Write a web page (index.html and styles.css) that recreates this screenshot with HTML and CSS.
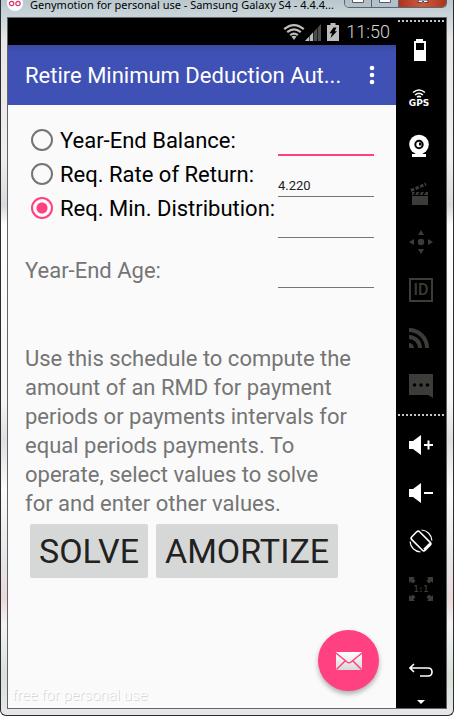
FILE: index.html
```
<!DOCTYPE html>
<html lang="en">
<head>
    <meta charset="UTF-8">
    <title>Genymotion for personal use</title>
    <link rel="stylesheet" href="styles.css">
</head>
<body>
    <div class="window">
        <div class="titlebar">
            <svg class="logo" width="16" height="16" viewBox="0 0 16 16">
                <circle cx="8" cy="8" r="8" fill="#fff"/>
                <g fill="none" stroke="#e0336a" stroke-width="1.2">
                    <circle cx="4.6" cy="8.5" r="2.2"/>
                    <circle cx="11" cy="8.5" r="2.2"/>
                </g>
            </svg>
            <span class="caption">Genymotion for personal use - Samsung Galaxy S4 - 4.4.4...</span>
            <div class="win-btns">
                <button class="win-btn" aria-label="Minimize"><svg width="12" height="4" viewBox="0 0 12 4"><path d="M.5 0v2.500h11V0" fill="#fff" stroke="#555b66"/></svg></button>
                <button class="win-btn" aria-label="Maximize"><svg width="12" height="4" viewBox="0 0 12 4"><path d="M.5 0v2.500h11V0" fill="#fff" stroke="#555b66"/></svg></button>
                <button class="win-btn close" aria-label="Close"><svg width="12" height="4" viewBox="0 0 12 4"><path d="M2 0L0.500 2.500h4L6 1l1.500 1.500h4L10 0z" fill="#fff" stroke="#4a4a58"/></svg></button>
            </div>
        </div>
        <div class="frame">
            <div class="screen">
                <div class="status">
                    <svg width="22" height="18" viewBox="0 0 22 18" fill="none" stroke="#bdbdbd" stroke-width="2.2">
                        <path d="M1.200 6.200Q11-2 20.800 6.200M4.200 9.200Q11 3.600 17.800 9.200M7.200 12.200Q11 9.200 14.800 12.200"/>
                        <path d="M8.500 13.600Q11 12 13.500 13.600L11 17z" fill="#bdbdbd" stroke="none"/>
                    </svg>
                    <svg width="16" height="18" viewBox="0 0 16 18">
                        <path d="M16 1v17H0z" fill="#4d4d4d"/>
                        <path d="M8 9.500V18H0z" fill="#bdbdbd"/>
                        <path d="M4.500 12v6M8.500 8v10M12.500 4v14" stroke="#000" stroke-width=".6"/>
                    </svg>
                    <svg class="charge" width="12" height="18" viewBox="0 0 12 18">
                        <path d="M3.500 0h5v2H12v16H0V2h3.500z" fill="#bdbdbd"/>
                        <path d="M6.500 4.500h3L7.800 8.300h2.200L3.500 15l1.500-4.800H2.500z" fill="#000"/>
                    </svg>
                    <span class="clock">11:50</span>
                </div>
                <div class="appbar">
                    <h1>Retire Minimum Deduction Aut...</h1>
                    <button class="more" aria-label="More options">
                        <svg width="6" height="20" viewBox="0 0 6 20" fill="#fff"><circle cx="3" cy="3" r="2.300"/><circle cx="3" cy="10" r="2.300"/><circle cx="3" cy="17" r="2.300"/></svg>
                    </button>
                </div>
                <div class="content">
                    <form class="form">
                        <div class="labels">
                            <label class="option"><input type="radio" name="solve">Year-End Balance:</label>
                            <label class="option"><input type="radio" name="solve">Req. Rate of Return:</label>
                            <label class="option"><input type="radio" name="solve" checked>Req. Min. Distribution:</label>
                            <label class="age" for="age">Year-End Age:</label>
                        </div>
                        <div class="fields">
                            <input type="text" class="field active" aria-label="Year-End Balance">
                            <input type="text" class="field" aria-label="Req. Rate of Return" value="4.220">
                            <input type="text" class="field" aria-label="Req. Min. Distribution">
                            <input type="text" class="field last" id="age">
                        </div>
                    </form>
                    <p class="help">Use this schedule to compute the amount of an RMD for payment periods or payments intervals for equal periods payments. To operate, select values to solve<br>for and enter other values.</p>
                    <div class="actions">
                        <button class="btn">SOLVE</button>
                        <button class="btn">AMORTIZE</button>
                    </div>
                </div>
                <button class="fab" aria-label="Mail">
                    <svg width="28" height="20" viewBox="0 0 28 20">
                        <defs><linearGradient id="g" x1="0" y1="0" x2="0" y2="1"><stop offset="0" stop-color="#fff"/><stop offset="1" stop-color="#d8d8d8"/></linearGradient></defs>
                        <rect x="1" y="1" width="26" height="18" rx="1" fill="url(#g)"/>
                        <path d="M1 2l11 9q2 1.500 4 0L27 2M1.500 18.500L10 10M26.500 18.500L18 10" fill="none" stroke="#ff4081" stroke-width="1.500"/>
                    </svg>
                </button>
                <span class="watermark">free for personal use</span>
            </div>
            <div class="toolbar">
                <div class="dots"></div>
                <button class="tool" aria-label="Battery">
                    <svg width="24" height="24" viewBox="0 0 24 24"><path d="M7 1h7v2h3v20H5V3h2z" fill="#fff"/><path d="M7 5h8v7H7z" fill="#000"/></svg>
                </button>
                <button class="tool gps">
                    <svg width="14" height="9" viewBox="0 0 14 9" fill="none" stroke="#fff" stroke-width="1.500"><path d="M1 3.500Q7-1.500 13 3.500M3 6Q7 2.500 11 6M5 8.300Q7 6.500 9 8.300"/></svg>
                    GPS
                </button>
                <button class="tool" aria-label="Camera">
                    <svg width="24" height="24" viewBox="0 0 24 24"><circle cx="10" cy="10.500" r="9.800" fill="#fff"/><path d="M7 18h6v2h4v3H3v-3h4z" fill="#fff"/><circle cx="10" cy="10.500" r="3.700" fill="#fff" stroke="#000" stroke-width="2"/><path d="M10 11.500V8.500h2.500v3z" fill="#000"/></svg>
                </button>
                <button class="tool off" aria-label="Screencast">
                    <svg width="24" height="24" viewBox="0 0 24 24"><path d="M3 10h16v13H3z" fill="#3c3c38"/><path d="M3 13.500h16" stroke="#000" stroke-width="1"/><path d="M5 13l2-3M9.500 13l2-3M14 13l2-3" stroke="#000" stroke-width="1.500"/><path d="M2 8.500L17 2" stroke="#3c3c38" stroke-width="3" stroke-dasharray="3.500 1.500"/></svg>
                </button>
                <button class="tool off" aria-label="Remote">
                    <svg width="24" height="24" viewBox="0 0 24 24" fill="#3c3c38"><circle cx="12" cy="12" r="3.200"/><path d="M12 0l3 5H9zM12 24l3-5H9zM0 12l5-3v6zM24 12l-5-3v6z"/></svg>
                </button>
                <button class="tool off ident"><span>ID</span></button>
                <button class="tool off" aria-label="Network">
                    <svg width="24" height="24" viewBox="0 0 24 24" fill="none" stroke="#3c3c38" stroke-width="4"><path d="M0 4a18 18 0 0 1 18 18M0 11a11 11 0 0 1 11 11"/><path d="M0 17a5 5 0 0 1 5 5H0z" fill="#3c3c38" stroke="none"/></svg>
                </button>
                <button class="tool off" aria-label="Messages">
                    <svg width="24" height="24" viewBox="0 0 24 24"><path d="M0 0h24v24l-5-3H0z" fill="#3c3c38"/><g fill="#000"><circle cx="5.500" cy="11" r="1.800"/><circle cx="12" cy="11" r="1.800"/><circle cx="18.500" cy="11" r="1.800"/></g></svg>
                </button>
                <div class="dots"></div>
                <button class="tool" aria-label="Volume up">
                    <svg width="24" height="24" viewBox="0 0 24 24"><path d="M0 8h4l8-6v20l-8-6H0z" fill="#fff"/><path d="M15 12h9M19.500 7.500v9" stroke="#fff" stroke-width="2"/></svg>
                </button>
                <button class="tool" aria-label="Volume down">
                    <svg width="24" height="24" viewBox="0 0 24 24"><path d="M0 8h4l8-6v20l-8-6H0z" fill="#fff"/><path d="M15 12h9" stroke="#fff" stroke-width="2"/></svg>
                </button>
                <button class="tool" aria-label="Rotate">
                    <svg width="24" height="24" viewBox="0 0 24 24" fill="none" stroke="#fff"><rect x="6.500" y="2.500" width="11" height="19" rx="2" stroke-width="1.600" transform="rotate(-45 12 12)"/><path d="M15 20.500l6-6" stroke-width="2"/><path d="M12.500 1a11 11 0 0 1 10.400 10.500M11.500 23A11 11 0 0 1 1.100 12.500" stroke-width="1.200"/></svg>
                </button>
                <button class="tool off scale">
                    <svg width="24" height="24" viewBox="0 0 24 24" fill="#3c3c38"><path d="M0 0h6L4.500 1.500 6.500 4 4 6.500 1.500 4.500 0 6zM24 0h-6l1.500 1.500L17.500 4 20 6.500l2.500-2L24 6zM0 24h6l-1.500-1.500 2-2.500L4 17.500l-2.500 2L0 18zM24 24h-6l1.500-1.500-2-2.500 2.500-2.500 2.500 2L24 18z"/></svg>
                    <span>1:1</span>
                </button>
                <button class="tool back" aria-label="Back">
                    <svg width="24" height="16" viewBox="0 0 24 16" fill="none" stroke="#fff" stroke-width="1.600"><path d="M5 2L1 6l4 4M1 6h18q4 0 4 4t-4 4h-8"/></svg>
                </button>
                <svg class="caret" width="8" height="4" viewBox="0 0 8 4"><path d="M0 0h8L4 4z" fill="#fff"/></svg>
            </div>
        </div>
    </div>
</body>
</html>
```
FILE: styles.css
```
* {
    box-sizing: border-box;
}
body {
    margin: 0;
    padding-right: 10px;
    background: #fff;
    font-family: Roboto, "Liberation Sans", sans-serif;
}
button {
    margin: 0;
    padding: 0;
    border: 0;
    background: none;
    font-family: inherit;
    cursor: pointer;
}
svg {
    display: block;
    flex: none;
}

/* glass window */
.window {
    display: flex;
    flex-direction: column;
    min-height: 100vh;
    padding: 0 6px 6px;
    border: 1px solid #2c2c30;
    border-top: 0;
    border-radius: 0 0 6px 6px;
    background: linear-gradient(#b9c8ce 0, #cbd6da 17px, #e9e6e7 40px, #f0eeee 160px, #d9d9dc 205px, #fdfdfd 225px, #f6f6f6 400px, #dfdfe2 440px, #fafafa 490px, #e6e6e8 560px, #ecd9da 598px, #f3f3f3 625px, #d8e2d9 675px, #e6e6e8 710px);
}
.titlebar {
    display: flex;
    align-items: flex-start;
    height: 17px;
}
.logo {
    margin-top: -5px;
}
.caption {
    flex: 1;
    min-width: 0;
    margin-left: 7px;
    font: 11px/9px "Noto Sans", sans-serif;
    color: #000;
    white-space: nowrap;
}
.win-btns {
    display: flex;
    height: 8px;
    border: 1px solid #5b6570;
    border-top: 0;
    border-radius: 0 0 5px 5px;
    overflow: hidden;
}
.win-btn {
    display: flex;
    align-items: flex-start;
    justify-content: center;
    width: 27px;
    border-right: 1px solid #5b6570;
    background: #b4c0c8;
}
.win-btn.close {
    width: 47px;
    border-right: 0;
    background: linear-gradient(90deg, #a93622, #d5573a 50%, #a93622);
}
.frame {
    flex: 1;
    display: flex;
    border: 1px solid #606468;
}

/* device screen */
.screen {
    position: relative;
    flex: 1;
    min-width: 0;
    background: #fafafa;
}
.status {
    display: flex;
    align-items: center;
    justify-content: flex-end;
    height: 27px;
    padding-right: 6px;
    background: #000;
}
.charge {
    margin: 0 7px 0 6px;
}
.clock {
    font-size: 18px;
    font-weight: 300;
    color: #d4d4d4;
}
.appbar {
    display: flex;
    align-items: center;
    justify-content: space-between;
    height: 60px;
    padding: 0 16px 0 17px;
    background: linear-gradient(#3949a0, #3f51b5 8px);
}
.appbar h1 {
    margin: 0;
    font-size: 22px;
    font-weight: 400;
    color: #fff;
    white-space: nowrap;
}
.more {
    width: 16px;
    display: flex;
    justify-content: center;
}
.content {
    padding: 10px 22px 0 17px;
}
.form {
    display: flex;
    justify-content: space-between;
}
.labels {
    display: flex;
    flex-direction: column;
    padding-top: 8px;
    font-size: 22px;
    white-space: nowrap;
}
.option {
    display: flex;
    align-items: center;
    height: 34px;
    padding-left: 6px;
    color: #000;
}
.option input {
    appearance: none;
    width: 22px;
    height: 22px;
    margin: 0 7px 0 0;
    border: 2px solid #757575;
    border-radius: 50%;
}
.option input:checked {
    border-color: #ff4081;
    background: radial-gradient(#ff4081 5px, transparent 6px);
}
.age {
    margin-top: 31px;
    line-height: 30px;
    color: #757575;
}
.fields {
    display: flex;
    flex-direction: column;
    width: 96px;
}
.field {
    width: 100%;
    height: 41px;
    padding: 18px 0 0;
    border: 0;
    border-bottom: 1px solid #757575;
    outline: 0;
    background: none;
    font: 13px Roboto, sans-serif;
    color: #212121;
}
.field.active {
    border-bottom: 2px solid #ff4081;
}
.field.last {
    margin-top: 9px;
}
.help {
    margin: 56px 19px 0 0;
    font-size: 22px;
    line-height: 29px;
    color: #757575;
}
.actions {
    display: flex;
    gap: 8px;
    padding: 6px 5px;
}
.btn {
    height: 54px;
    padding: 0 9px;
    border-radius: 2px;
    background: #d6d7d7;
    font-size: 34px;
    color: #212121;
}
.fab {
    position: absolute;
    right: 17px;
    bottom: 17px;
    display: flex;
    align-items: center;
    justify-content: center;
    width: 61px;
    height: 61px;
    border-radius: 50%;
    background: #ff4081;
    box-shadow: 0 3px 5px rgba(0, 0, 0, .3);
}
.watermark {
    position: absolute;
    left: 4px;
    bottom: 4px;
    font-size: 15px;
    font-weight: 300;
    color: #fff;
    text-shadow: 1px 1px 0 #d4d4d4;
}

/* emulator toolbar */
.toolbar {
    display: flex;
    flex-direction: column;
    align-items: center;
    width: 50px;
    background: #000;
}
.dots {
    width: 46px;
    height: 2px;
    margin: 2px 0 4px;
    background: repeating-linear-gradient(90deg, #c4c4c4 0 2px, #000 2px 4px);
}
.tool {
    display: flex;
    align-items: center;
    justify-content: center;
    width: 50px;
    height: 48px;
    color: #fff;
}
.tool.off {
    color: #3c3c38;
}
.tool + .dots {
    margin: 4px 0 5px;
}
.gps {
    flex-direction: column;
    gap: 1px;
    padding-right: 4px;
    font: bold 9px/9px "DejaVu Sans", sans-serif;
}
.ident span {
    width: 24px;
    border: 2px solid #3c3c38;
    font-size: 16px;
    font-weight: 500;
    line-height: 20px;
}
.scale {
    display: grid;
    place-content: center;
    place-items: center;
}
.scale svg,
.scale span {
    grid-area: 1 / 1;
}
.scale span {
    font: bold 8px "DejaVu Sans Mono", monospace;
}
.back {
    margin-top: auto;
}
.caret {
    margin: 6px 0 4px;
}
```
